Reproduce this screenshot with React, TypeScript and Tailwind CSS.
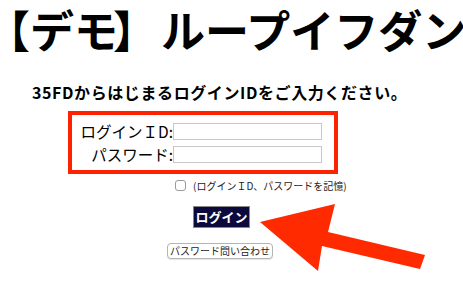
import React from "react";

const jp = { fontFamily: '"Noto Sans CJK JP", "Noto Sans", sans-serif' };

export default function App() {
  return (
    <div className="relative w-[463px] h-[283px] overflow-hidden bg-white text-black" style={jp}>
      <h1 className="-ml-[14px] pt-[4px] text-[44px] leading-[50px] font-bold whitespace-nowrap">
        <span>【デ</span>
        <span className="tracking-[-5px]">モ</span>
        <span>】</span>
        <span className="ml-[4px]">ループイフダン</span>
      </h1>
      <p className="mt-[28px] pl-[32px] text-[16px] leading-[20px] font-bold tracking-[0.6px] whitespace-nowrap">
        35FDからはじまるログインIDをご入力ください。
      </p>
      <div className="ml-[68px] mt-[9px] w-[270px] h-[63px] border-[4px] border-[#ff2200] flex flex-col gap-[6px] pt-[8px]">
        <div className="flex items-center h-[17px]">
          <span className="w-[101px] text-right text-[15.5px] leading-[17px] whitespace-nowrap">ログインＩD:</span>
          <input className="w-[149px] h-[17px] border border-[#c8c8c8] bg-white" />
        </div>
        <div className="flex items-center h-[17px]">
          <span className="w-[101px] text-right text-[15.5px] leading-[17px] whitespace-nowrap">パスワード:</span>
          <input type="password" className="w-[149px] h-[17px] border border-[#c8c8c8] bg-white" />
        </div>
      </div>
      <div className="ml-[175px] mt-[5px] flex items-center gap-[7px] h-[13px]">
        <span className="w-[11px] h-[11px] border border-[#9a9a9a] rounded-[3px] bg-white" />
        <span className="text-[10px] leading-[12px] text-[#222] whitespace-nowrap">(ログインＩD、パスワードを記憶)</span>
      </div>
      <div className="ml-[193px] mt-[14px]">
        <button className="w-[57px] h-[22px] bg-[#0c0a3c] border border-[#888] text-white font-bold text-[13px] leading-[20px] whitespace-nowrap flex items-center justify-center">
          ログイン
        </button>
      </div>
      <div className="ml-[167px] mt-[15px]">
        <button className="w-[106px] h-[16px] rounded-[4px] bg-white border border-[#b4b4b4] text-[10px] leading-[14px] text-[#222] whitespace-nowrap flex items-center justify-center shadow-[0_1px_1px_rgba(0,0,0,0.1)]">
          パスワード問い合わせ
        </button>
      </div>
      <svg className="absolute left-0 top-0" width="463" height="283" viewBox="0 0 463 283">
        <polygon
          points="260,222 335,204 328,232 425,255 420,269 322,246 318,271"
          fill="#ff2a00"
        />
      </svg>
    </div>
  );
}
